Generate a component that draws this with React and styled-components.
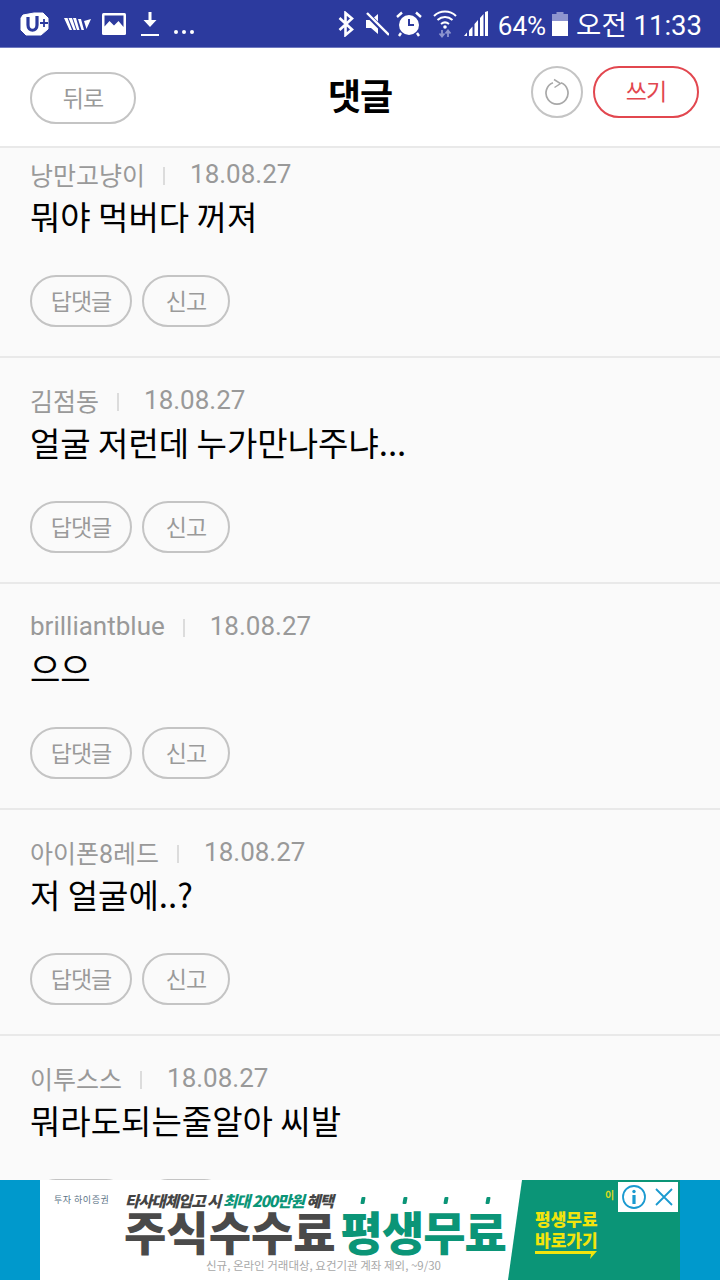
import React from 'react';
import styled, { createGlobalStyle } from 'styled-components';

const GlobalStyle = createGlobalStyle`
  html, body {
    margin: 0;
    padding: 0;
    background: #fafafa;
  }
  * {
    box-sizing: border-box;
  }
  body {
    font-family: Roboto, "Noto Sans CJK KR", sans-serif;
  }
`;

const Page = styled.div`
  width: 720px;
  height: 1280px;
  display: flex;
  flex-direction: column;
  overflow: hidden;
`;

const StatusBar = styled.div`
  height: 48px;
  flex: none;
  display: flex;
  align-items: center;
  justify-content: space-between;
  padding: 0 18px 0 20px;
  background: #2c3a9e;
  border-bottom: 1px solid #6f79c0;
  color: #fff;
`;

const StatusGroup = styled.div`
  display: flex;
  align-items: center;
`;

const StatusSlot = styled.span`
  display: flex;
  align-items: center;
  margin-left: ${p => p.$left || 0}px;
`;

const StatusText = styled.span`
  font-size: ${p => p.$size || 26}px;
  line-height: 40px;
  padding-top: 4px;
  margin-left: ${p => p.$left || 0}px;
  white-space: nowrap;
`;

const Dots = styled.span`
  display: flex;
  gap: 4px;
  margin: 16px 0 0 15px;

  i {
    width: 4px;
    height: 4px;
    border-radius: 50%;
    background: #fff;
  }
`;

const Header = styled.header`
  height: 100px;
  flex: none;
  position: relative;
  display: flex;
  align-items: center;
  justify-content: space-between;
  padding: 2px 21px 0 30px;
  background: #fff;
  border-bottom: 2px solid #e9e9e9;
`;

const Title = styled.h1`
  position: absolute;
  left: 0;
  right: 0;
  top: 23px;
  margin: 0;
  text-align: center;
  font-family: "Noto Sans CJK KR", sans-serif;
  font-size: 36px;
  line-height: 46px;
  font-weight: 700;
  letter-spacing: -1px;
  color: #000;
`;

const HeaderRight = styled.div`
  display: flex;
  align-items: center;
  gap: 10px;
  margin-top: -13px;
`;

const PillButton = styled.button`
  height: 52px;
  width: ${p => p.$width}px;
  padding: 0 0 2px;
  border-radius: 26px;
  border: 2px solid ${p => (p.$red ? '#e2474f' : '#c4c4c4')};
  background: transparent;
  color: ${p => (p.$red ? '#e2474f' : '#9a9a9a')};
  font-family: "Noto Sans CJK KR", sans-serif;
  font-size: 23px;
  line-height: 1;
  letter-spacing: -1px;
  display: flex;
  align-items: center;
  justify-content: center;
`;

const RoundButton = styled.button`
  width: 52px;
  height: 52px;
  padding: 0;
  border-radius: 50%;
  border: 2px solid #c4c4c4;
  background: transparent;
  display: flex;
  align-items: center;
  justify-content: center;
`;

const List = styled.div`
  flex: 1;
  min-height: 0;
  overflow: hidden;
  background: #fafafa;
`;

const Scroller = styled.div`
  margin-top: -16px;
`;

const Item = styled.div`
  height: 226px;
  padding: 27px 30px 0;
  border-bottom: 2px solid #e9e9e9;
`;

const Meta = styled.div`
  display: flex;
  align-items: center;
  height: 30px;
  font-family: Roboto, "Noto Sans CJK KR", sans-serif;
  font-size: 26px;
  color: #999;
`;

const Author = styled.span`
  font-size: ${p => (p.$latin ? 26 : 25)}px;
`;

const Divider = styled.span`
  width: 2px;
  height: 18px;
  margin: 3px 25px 0 18px;
  background: #dcdcdc;
`;

const Body = styled.div`
  margin-top: 4px;
  height: 46px;
  font-family: "Noto Sans CJK KR", sans-serif;
  font-size: 33px;
  line-height: 46px;
  color: #000;
`;

const Actions = styled.div`
  display: flex;
  gap: 10px;
  margin-top: 36px;
`;

const AdBar = styled.div`
  height: 100px;
  flex: none;
  display: flex;
  justify-content: center;
  background: #0099cc;
`;

const AdCenter = styled.div`
  width: 640px;
  position: relative;
  background: #fff;
  overflow: hidden;
  font-family: "Noto Sans CJK KR", sans-serif;
`;

const AdGreen = styled.div`
  position: absolute;
  top: 0;
  bottom: 0;
  right: 0;
  width: 172px;
  background: #0b9577;
  clip-path: polygon(14px 0, 100% 0, 100% 100%, 0 100%);
`;

const AdLogo = styled.div`
  position: absolute;
  left: 14px;
  top: 14px;
  font-size: 9px;
  line-height: 12px;
  letter-spacing: 0.5px;
  color: #5b7386;
  white-space: nowrap;
`;

const AdTop = styled.div`
  position: absolute;
  left: 85px;
  top: 8px;
  font-size: 15.5px;
  line-height: 24px;
  font-weight: 900;
  font-style: italic;
  letter-spacing: -1px;
  color: #444;
  white-space: nowrap;

  span {
    color: #0b9577;
  }
`;

const AdTicks = styled.div`
  position: absolute;
  left: 321px;
  top: 17px;
  display: flex;
  gap: 37.5px;

  i {
    width: 4px;
    height: 7px;
    border-radius: 1px;
    background: #0b9577;
    transform: skewX(-10deg);
  }
`;

const AdHeadline = styled.div`
  position: absolute;
  left: 84px;
  top: 24px;
  display: flex;
  gap: 5px;
  font-size: 46px;
  line-height: 52px;
  font-weight: 900;
  white-space: nowrap;
`;

const AdWord = styled.span`
  color: ${p => (p.$green ? '#0b9577' : '#4a4a4a')};
  letter-spacing: ${p => (p.$green ? -1 : 0)}px;
`;

const AdFine = styled.div`
  position: absolute;
  left: 166px;
  top: 76px;
  font-size: 11.5px;
  line-height: 18px;
  color: #a8a8a8;
  white-space: nowrap;
`;

const AdCta = styled.div`
  position: absolute;
  left: 27px;
  top: 28px;
  font-size: 17px;
  line-height: 21px;
  font-weight: 900;
  color: #f2e40c;
  white-space: nowrap;
`;

const AdArrow = styled.svg`
  position: absolute;
  left: 27px;
  top: 70px;
`;

const AdTag = styled.span`
  position: absolute;
  left: 97px;
  top: 9px;
  font-size: 10px;
  line-height: 12px;
  font-weight: 700;
  color: #d8d820;
`;

const AdChoice = styled.div`
  position: absolute;
  left: 578px;
  top: 2px;
  width: 60px;
  height: 30px;
  background: #fff;
  display: flex;
  align-items: center;
  gap: 9px;
  padding-left: 4px;
`;

const comments = [
  { id: 1, name: '낭만고냥이', date: '18.08.27', text: '뭐야 먹버다 꺼져' },
  { id: 2, name: '김점동', date: '18.08.27', text: '얼굴 저런데 누가만나주냐...' },
  { id: 3, name: 'brilliantblue', date: '18.08.27', text: '으으', latin: true },
  { id: 4, name: '아이폰8레드', date: '18.08.27', text: '저 얼굴에..?' },
  { id: 5, name: '이투스스', date: '18.08.27', text: '뭐라도되는줄알아 씨발' },
];

const AppLogo = () => (
  <svg width="29" height="24" viewBox="0 0 29 24" fill="none">
    <path d="M3 3 L14 1 L23 1 L28 6 V17 L21 23 L6 23 L1 18 V6 Z" fill="#fff" stroke="#fff" strokeLinejoin="round" />
    <path d="M8 5 V13 C8 20 17 20 17 13 V4" stroke="#2c3a9e" strokeWidth="3.2" />
    <path d="M20 11 H28 M24 7 V15" stroke="#2c3a9e" strokeWidth="1.8" />
  </svg>
);

const WaveLogo = () => (
  <svg width="27" height="12" viewBox="0 0 27 12" fill="#fff">
    <path d="M0 0 H3.5 L8 12 H5.5 Z M4.5 0 H8 L12 12 H9.5 Z M9 0 H12 L15.5 12 H13 Z M14 1 H17 L20 12 H17.5 Z M20 3 L27 1 L22.5 11 Z" />
  </svg>
);

const PictureIcon = () => (
  <svg width="24" height="22" viewBox="0 0 24 22">
    <rect x="0" y="0" width="24" height="22" rx="1.5" fill="#fff" />
    <path d="M2.5 2.5 H21.5 V14 L16.5 8 L12 12.5 L7.5 8 L2.5 13.5 Z" fill="#2c3a9e" />
  </svg>
);

const DownloadIcon = () => (
  <svg width="18" height="24" viewBox="0 0 18 24" fill="#fff">
    <path d="M7.5 0 H10.5 V8 H15.5 L9 15 L2.5 8 H7.5 Z" />
    <rect x="0" y="22" width="18" height="2" />
  </svg>
);

const BluetoothIcon = () => (
  <svg width="16" height="26" viewBox="0 0 16 26" fill="none" stroke="#fff" strokeWidth="2.6">
    <path d="M1.5 7 L14 18.5 L7.5 24 V2 L14 7.5 L1.5 19" />
  </svg>
);

const MuteIcon = () => (
  <svg width="24" height="24" viewBox="0 0 24 24">
    <path d="M1 8 H6 L13 2 V22 L6 16 H1 Z" fill="#fff" />
    <path d="M2 2 L23 23" stroke="#2c3a9e" strokeWidth="5" />
    <path d="M2 1 L24 23" stroke="#fff" strokeWidth="2.4" />
  </svg>
);

const AlarmIcon = () => (
  <svg width="26" height="26" viewBox="0 0 26 26" fill="none">
    <circle cx="13" cy="14" r="10" fill="#fff" />
    <path d="M13 8 V14 H18" stroke="#2c3a9e" strokeWidth="2" />
    <path d="M1 6 L6 1.5 M25 6 L20 1.5 M5 22 L3 25 M21 22 L23 25" stroke="#fff" strokeWidth="2.4" />
  </svg>
);

const WifiIcon = () => (
  <svg width="24" height="28" viewBox="0 0 24 28" fill="none">
    <path d="M1 6 C7 0 17 0 23 6" stroke="#fff" strokeWidth="2" />
    <path d="M4.5 10 C9 6 15 6 19.5 10" stroke="#fff" strokeWidth="2" />
    <path d="M8 14 C10.5 12 13.5 12 16 14" stroke="#fff" strokeWidth="2" />
    <circle cx="12" cy="17" r="1.8" fill="#fff" />
    <path d="M9 20 V26 M6.5 23.5 L9 26.5 L11.5 23.5" stroke="#8e95cf" strokeWidth="1.8" />
    <path d="M15 27 V21 M12.5 23.5 L15 20.5 L17.5 23.5" stroke="#8e95cf" strokeWidth="1.8" />
  </svg>
);

const SignalIcon = () => (
  <svg width="24" height="25" viewBox="0 0 24 25" fill="#fff">
    <path d="M0 25 L3 21.5 V25 Z" />
    <path d="M5 19.5 L8.5 15.5 V25 H5 Z" />
    <path d="M10.5 13 L14 9 V25 H10.5 Z" />
    <path d="M16 7 L19.5 3 V25 H16 Z" />
    <path d="M21 1 L24 0 V25 H21 Z" />
  </svg>
);

const BatteryIcon = () => (
  <svg width="16" height="24" viewBox="0 0 16 24">
    <rect x="4.5" y="0" width="7" height="3" fill="#8e95cf" />
    <rect x="0" y="2" width="16" height="22" fill="#8e95cf" />
    <rect x="0" y="9" width="16" height="15" fill="#fff" />
  </svg>
);

const RefreshIcon = () => (
  <svg width="26" height="28" viewBox="0 0 26 28" fill="none">
    <path d="M17 4.8 A11 11 0 1 1 9 4.8" stroke="#a8a8a8" strokeWidth="1.7" />
    <path d="M10 1.5 L16.5 5.5 L10.5 9.5" stroke="#a8a8a8" strokeWidth="1.5" />
  </svg>
);

const InfoIcon = () => (
  <svg width="24" height="24" viewBox="0 0 24 24" fill="none">
    <circle cx="12" cy="12" r="11" stroke="#1a9ad0" strokeWidth="1.8" />
    <circle cx="12" cy="6.5" r="1.7" fill="#1a9ad0" />
    <rect x="10.4" y="10" width="3.2" height="9" fill="#1a9ad0" />
  </svg>
);

const CloseIcon = () => (
  <svg width="18" height="18" viewBox="0 0 18 18" fill="none">
    <path d="M1 1 L17 17 M17 1 L1 17" stroke="#1a9ad0" strokeWidth="1.8" />
  </svg>
);

const App = () => {
  return (
    <Page>
      <GlobalStyle />
      <StatusBar>
        <StatusGroup>
          <AppLogo />
          <StatusSlot $left={15}>
            <WaveLogo />
          </StatusSlot>
          <StatusSlot $left={11}>
            <PictureIcon />
          </StatusSlot>
          <StatusSlot $left={15}>
            <DownloadIcon />
          </StatusSlot>
          <Dots>
            <i />
            <i />
            <i />
          </Dots>
        </StatusGroup>
        <StatusGroup>
          <BluetoothIcon />
          <StatusSlot $left={11}>
            <MuteIcon />
          </StatusSlot>
          <StatusSlot $left={7}>
            <AlarmIcon />
          </StatusSlot>
          <StatusSlot $left={11}>
            <WifiIcon />
          </StatusSlot>
          <StatusSlot $left={7}>
            <SignalIcon />
          </StatusSlot>
          <StatusText $left={10}>64%</StatusText>
          <StatusSlot $left={6}>
            <BatteryIcon />
          </StatusSlot>
          <StatusText $size={27.5} $left={8}>
            오전 11:33
          </StatusText>
        </StatusGroup>
      </StatusBar>
      <Header>
        <PillButton $width={106}>뒤로</PillButton>
        <Title>댓글</Title>
        <HeaderRight>
          <RoundButton>
            <RefreshIcon />
          </RoundButton>
          <PillButton $red $width={106}>
            쓰기
          </PillButton>
        </HeaderRight>
      </Header>
      <List>
        <Scroller>
          {comments.map(comment => (
            <Item key={comment.id}>
              <Meta>
                <Author $latin={comment.latin}>{comment.name}</Author>
                <Divider />
                {comment.date}
              </Meta>
              <Body>{comment.text}</Body>
              <Actions>
                <PillButton $width={102}>답댓글</PillButton>
                <PillButton $width={88}>신고</PillButton>
              </Actions>
            </Item>
          ))}
        </Scroller>
      </List>
      <AdBar>
        <AdCenter>
          <AdLogo>투자 하이증권</AdLogo>
          <AdTop>
            타사대체입고 시 <span>최대 200만원</span> 혜택
          </AdTop>
          <AdTicks>
            <i />
            <i />
            <i />
            <i />
          </AdTicks>
          <AdHeadline>
            <AdWord>주식수수료</AdWord>
            <AdWord $green>평생무료</AdWord>
          </AdHeadline>
          <AdFine>신규, 온라인 거래대상, 요건기관 계좌 제외, ~9/30</AdFine>
          <AdGreen>
            <AdCta>
              평생무료
              <br />
              바로가기
            </AdCta>
            <AdArrow width="64" height="10" viewBox="0 0 64 10">
              <path d="M0 1 H62 L55 9 L56 4 H0 Z" fill="#f2e40c" />
            </AdArrow>
            <AdTag>이</AdTag>
          </AdGreen>
          <AdChoice>
            <InfoIcon />
            <CloseIcon />
          </AdChoice>
        </AdCenter>
      </AdBar>
    </Page>
  );
};

export default App;
